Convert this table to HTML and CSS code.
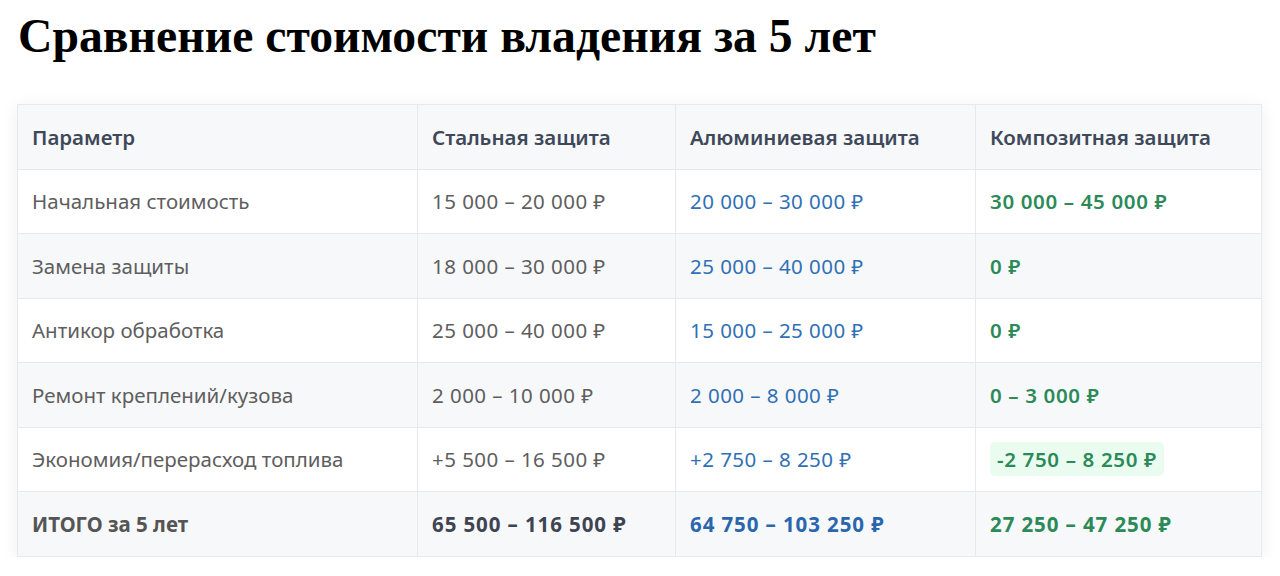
FILE: index.html
```html
<!DOCTYPE html>
<html lang="ru">
<head>
<meta charset="utf-8">
<link rel="stylesheet" href="styles.css">
</head>
<body>
<h1 class="title">Сравнение стоимости владения за 5 лет</h1>
<div class="table-wrap">
<table class="cmp">
<thead>
<tr><th>Параметр</th><th>Стальная защита</th><th>Алюминиевая защита</th><th>Композитная защита</th></tr>
</thead>
<tbody>
<tr><td>Начальная стоимость</td><td class="num">15 000 – 20 000 ₽</td><td class="num blue">20 000 – 30 000 ₽</td><td class="num green">30 000 – 45 000 ₽</td></tr>
<tr><td>Замена защиты</td><td class="num">18 000 – 30 000 ₽</td><td class="num blue">25 000 – 40 000 ₽</td><td class="num green">0 ₽</td></tr>
<tr><td>Антикор обработка</td><td class="num">25 000 – 40 000 ₽</td><td class="num blue">15 000 – 25 000 ₽</td><td class="num green">0 ₽</td></tr>
<tr><td>Ремонт креплений/кузова</td><td class="num">2 000 – 10 000 ₽</td><td class="num blue">2 000 – 8 000 ₽</td><td class="num green">0 – 3 000 ₽</td></tr>
<tr><td>Экономия/перерасход топлива</td><td class="num">+5 500 – 16 500 ₽</td><td class="num blue">+2 750 – 8 250 ₽</td><td class="num green"><span class="badge">-2 750 – 8 250 ₽</span></td></tr>
<tr class="total"><td>ИТОГО за 5 лет</td><td class="num">65 500 – 116 500 ₽</td><td class="num blue">64 750 – 103 250 ₽</td><td class="num green">27 250 – 47 250 ₽</td></tr>
</tbody>
</table>
</div>
</body>
</html>
```

FILE: styles.css
```css
html, body { margin: 0; padding: 0; background: #ffffff; }
body { padding: 0 17px; }
.title {
  font-family: "Liberation Serif", "Times New Roman", serif;
  font-weight: 700;
  font-size: 47.7px;
  line-height: 56px;
  color: #000;
  margin: 8px 0 40px 1px;
}
.table-wrap {
  width: 1245px;
  box-shadow: 0 3px 16px rgba(0,0,0,0.07);
}
.cmp {
  width: 100%;
  border-collapse: collapse;
  font-family: "Noto Sans", "Open Sans", sans-serif;
  font-size: 20.5px;
  line-height: 28px;
  color: #5e5e5e;
  table-layout: fixed;
}
.cmp th, .cmp td {
  border: 1px solid #e6e9ee;
  padding: 17.75px 14px 17.75px 14px;
  text-align: left;
  vertical-align: middle;
}
.cmp th:nth-child(1) { width: 371px; }
.cmp th:nth-child(2) { width: 229px; }
.cmp th:nth-child(3) { width: 271px; }
.cmp th {
  background: #f7f8fa;
  color: #3e4858;
  font-weight: 600;
}
.cmp tbody tr:nth-child(even) td { background: #f7f8fa; }
.cmp td.num { letter-spacing: 0.45px; }
.cmp tr.total td { background: #f7f8fa; font-weight: 700; color: #555555; }
.cmp td.blue { color: #3070b5; }
.cmp td.green { color: #2b8a57; font-weight: 600; letter-spacing: 0.65px; }
.cmp tr.total td.num { letter-spacing: 0.9px; }
.cmp tr.total td.blue { color: #2a66ad; font-weight: 700; }
.cmp tr.total td.green { color: #2b8a57; font-weight: 700; }
.cmp tr.total td:nth-child(2) { color: #3e4452; }
.badge {
  display: inline-block;
  background: #eafcef;
  border-radius: 5px;
  padding: 3px 7px;
  margin: -3px 0;
}
```
